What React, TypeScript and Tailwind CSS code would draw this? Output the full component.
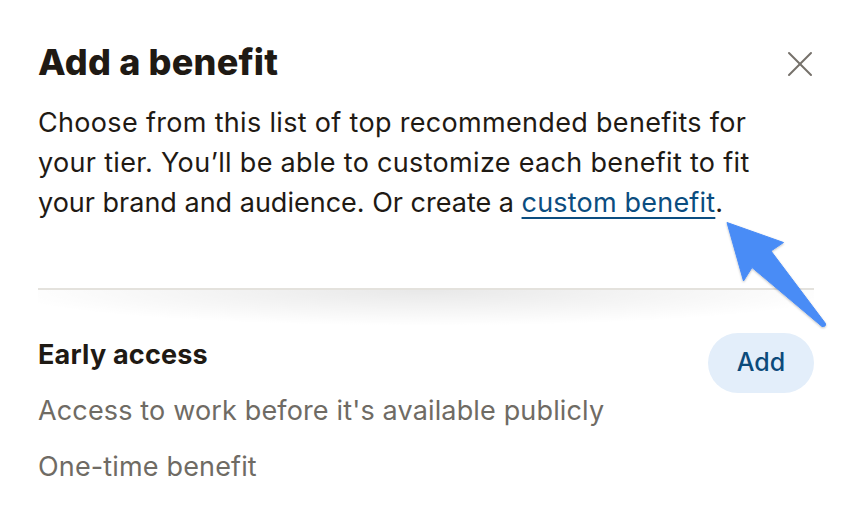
import { X } from 'lucide-react'

const font = { fontFamily: 'Inter, "Liberation Sans", sans-serif' }

function Arrow() {
  // annotation arrow drawn over the page
  return (
    <svg className="pointer-events-none absolute left-0 top-0" width="848" height="524" viewBox="0 0 848 524">
      <defs>
        <filter id="arrowShadow" x="-20%" y="-20%" width="140%" height="140%">
          <feDropShadow dx="0" dy="1" stdDeviation="1" floodColor="#000" floodOpacity="0.25" />
        </filter>
      </defs>
      <path
        d="M727 222.5 L783.5 242.5 L771 251 L825.5 323.5 Q826 327 822 326.5 L752 267.5 L743.5 281 Z"
        fill="#4a8cf6"
        stroke="#4a8cf6"
        strokeWidth="1"
        strokeLinejoin="round"
        filter="url(#arrowShadow)"
      />
    </svg>
  )
}

export default function App() {
  return (
    <div className="relative h-[524px] w-[848px] overflow-hidden bg-white" style={font}>
      <div className="pl-[38px] pr-[34px] pt-[42px]">
        {/* Header */}
        <div className="flex h-[40px] items-start justify-between">
          <h1 className="text-[36px] font-extrabold leading-[40px] tracking-[0.2px] text-[#1f1a14]">Add a benefit</h1>
          <button className="mr-[-8px] text-[#76716b]">
            <X className="h-[44px] w-[44px]" strokeWidth={1.1} />
          </button>
        </div>

        <p className="mt-[21px] text-[27px] leading-[40px] tracking-[0.32px] text-[#1f1a14]">
          Choose from this list of top recommended benefits for
          <br />
          your tier. You’ll be able to customize each benefit to fit
          <br />
          <span className="tracking-normal">
            your brand and audience. Or create a{' '}
            <a href="#" className="tracking-[0.2px] text-[#0b4d80] underline decoration-[2px] underline-offset-[5px]">
              custom benefit
            </a>
            .
          </span>
        </p>

        {/* Divider */}
        <div className="mt-[65px] h-[2px] bg-[#e4e2dd]" />
        <div className="h-[36px] bg-[radial-gradient(ellipse_55%_100%_at_50%_0%,rgba(0,0,0,0.09),rgba(0,0,0,0)_100%)]" />

        {/* Benefit row */}
        <div className="mt-[7px] flex items-start justify-between">
          <div className="pt-[4px]">
            <h2 className="text-[27px] font-bold leading-[36px] tracking-[0.2px] text-[#1f1a14]">Early access</h2>
            <p className="mt-[20px] text-[27px] leading-[36px] tracking-[0.15px] text-[#6f6b64]">
              Access to work before it's available publicly
            </p>
            <p className="mt-[20px] text-[27px] leading-[36px] tracking-[0.15px] text-[#6f6b64]">One-time benefit</p>
          </div>
          <button className="flex h-[60px] w-[106px] items-center justify-center rounded-full bg-[#e3eefa] text-[25px] font-medium text-[#0b4a7a]">
            Add
          </button>
        </div>
      </div>
      <Arrow />
    </div>
  )
}
